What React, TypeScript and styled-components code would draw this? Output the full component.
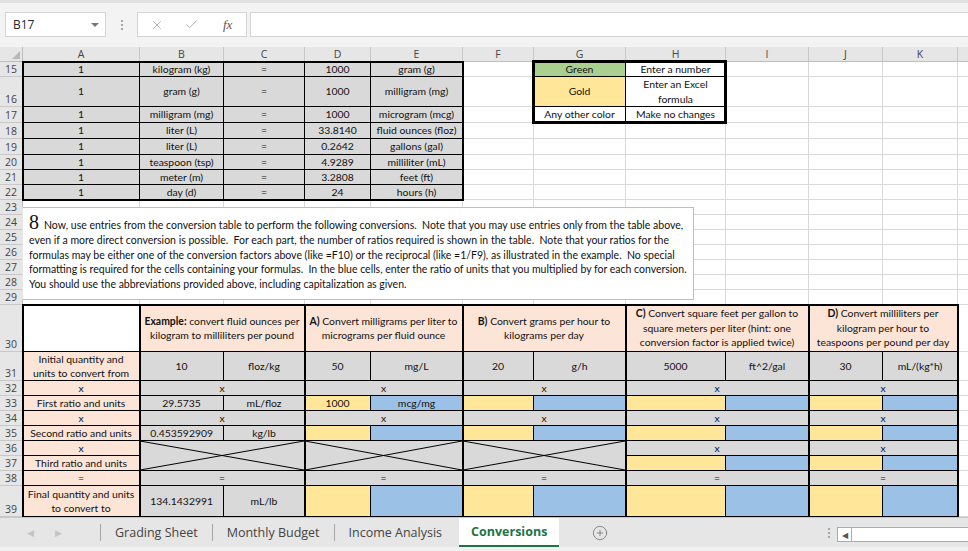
import React from 'react';
import styled, { createGlobalStyle } from 'styled-components';
import { X, Check, CirclePlus } from 'lucide-react';

const GRAY = '#d9d9d9';
const GOLD = '#ffe699';
const BLUE = '#9bc2e6';
const PEACH = '#fce4d6';
const GREEN = '#a9d08e';

const COL_WIDTHS = [117, 84, 81, 66, 92, 71, 92, 100, 83, 74, 75, 60];
// column L is only a sliver at the right edge, its letter is off-screen
const COL_NAMES = ['A', 'B', 'C', 'D', 'E', 'F', 'G', 'H', 'I', 'J', 'K', ''];
const ROW_HEIGHTS: [number, number][] = [
  [15, 15], [16, 30], [17, 16], [18, 16], [19, 16], [20, 15], [21, 15], [22, 15],
  [23, 15], [24, 15], [25, 15], [26, 15], [27, 15], [28, 15], [29, 15],
  [30, 47], [31, 29], [32, 15], [33, 15], [34, 15], [35, 15], [36, 15], [37, 15], [38, 15], [39, 31],
];

const GlobalStyle = createGlobalStyle`
  html, body { margin: 0; padding: 0; background: #fff; }
  body { font-family: Lato, "Liberation Sans", sans-serif; }
  * { box-sizing: border-box; }
`;

const Window = styled.div`
  width: 968px;
  height: 551px;
  overflow: hidden;
  display: flex;
  flex-direction: column;
  background: #f3f3f3;
`;

/* ---------- formula bar ---------- */

const FormulaBar = styled.div`
  height: 47px;
  flex: none;
  display: flex;
  align-items: flex-start;
  padding: 9px 0 0 5px;
  border-top: 3px solid #e1e1e1;
`;

const NameBox = styled.div`
  width: 101px;
  height: 25px;
  background: #fff;
  border: 1px solid #d4d4d4;
  display: flex;
  align-items: center;
  justify-content: space-between;
  padding: 0 6px 0 7px;
  font-family: "Open Sans", sans-serif;
  font-size: 12px;
  color: #262626;
`;

const DropArrow = styled.span`
  width: 0;
  height: 0;
  border-left: 4px solid transparent;
  border-right: 4px solid transparent;
  border-top: 4px solid #777;
`;

const Dots = styled.div`
  width: 31px;
  height: 25px;
  display: flex;
  flex-direction: column;
  align-items: center;
  justify-content: center;
  gap: 2px;
  span {
    width: 2px;
    height: 2px;
    background: #a6a6a6;
  }
`;

const FuncBox = styled.div`
  width: 110px;
  height: 25px;
  background: #fff;
  border: 1px solid #d4d4d4;
  display: flex;
  align-items: center;
  padding-left: 12px;
  gap: 20px;
  color: #a6a6a6;
`;

const Fx = styled.span`
  font-family: "Liberation Serif", serif;
  font-style: italic;
  font-size: 13px;
  color: #555;
  margin-left: 4px;
`;

const FormulaInput = styled.div`
  flex: 1;
  height: 25px;
  margin-left: 3px;
  background: #fff;
  border: 1px solid #d4d4d4;
  border-right: none;
`;

/* ---------- sheet grid ---------- */

const SheetArea = styled.div`
  position: relative;
  flex: none;
  height: 470px;
  overflow: hidden;
  background: #fff;
`;

const Grid = styled.div`
  display: grid;
  grid-template-columns: 23px ${COL_WIDTHS.map((w) => `${w}px`).join(' ')};
  grid-template-rows: 15px ${ROW_HEIGHTS.map(([, h]) => `${h}px`).join(' ')};
`;

const Corner = styled.div`
  grid-column: 1;
  grid-row: 1;
  background: #e6e6e6;
  border-right: 1px solid #bdbdbd;
  border-bottom: 1px solid #bdbdbd;
  position: relative;
  &::after {
    content: '';
    position: absolute;
    right: 2px;
    bottom: 2px;
    border-left: 8px solid transparent;
    border-bottom: 8px solid #b8b8b8;
  }
`;

const ColHead = styled.div<{ $col: number }>`
  grid-column: ${(p) => p.$col + 2};
  grid-row: 1;
  background: #e6e6e6;
  border-right: 1px solid #c8c8c8;
  border-bottom: 1px solid #bdbdbd;
  display: flex;
  align-items: center;
  justify-content: center;
  font-family: "Open Sans", sans-serif;
  font-size: 10.5px;
  color: #444;
  overflow: hidden;
`;

const RowHead = styled.div<{ $row: number }>`
  grid-column: 1;
  grid-row: ${(p) => p.$row - 13};
  background: #e6e6e6;
  border-right: 1px solid #bdbdbd;
  border-bottom: 1px solid #c8c8c8;
  display: flex;
  align-items: flex-end;
  justify-content: center;
  font-family: "Open Sans", sans-serif;
  font-size: 10.5px;
  line-height: 14px;
  color: #444;
`;

const GridCell = styled.div<{ $col: number; $row: number }>`
  grid-column: ${(p) => p.$col + 2};
  grid-row: ${(p) => p.$row - 13};
  border-right: 1px solid #d9d9d9;
  border-bottom: 1px solid #d9d9d9;
`;

type CellProps = {
  $col: number;
  $row: number;
  $cs?: number;
  $rs?: number;
  $fill?: string;
  $align?: 'center' | 'right';
};

const Cell = styled.div<CellProps>`
  grid-column: ${(p) => p.$col + 2} / span ${(p) => p.$cs ?? 1};
  grid-row: ${(p) => p.$row - 13} / span ${(p) => p.$rs ?? 1};
  display: flex;
  align-items: center;
  justify-content: ${(p) => (p.$align === 'right' ? 'flex-end' : 'center')};
  padding: ${(p) => (p.$align === 'right' ? '0 10px 0 0' : '0 1px')};
  text-align: center;
  background: ${(p) => p.$fill ?? '#fff'};
  border-right: 1px solid #000;
  border-bottom: 1px solid #000;
  font-size: 10.4px;
  line-height: 14.5px;
  color: #111;
  white-space: nowrap;
  overflow: hidden;
  min-width: 0;
  b {
    font-weight: 700;
  }
`;

const Cross = styled.svg`
  position: absolute;
  inset: 0;
  width: 100%;
  height: 100%;
`;

const CrossCell = styled(Cell)`
  position: relative;
`;

const Frame = styled.div<{ $col: number; $row: number; $cs: number; $rs: number; $w: number }>`
  grid-column: ${(p) => p.$col + 2} / span ${(p) => p.$cs};
  grid-row: ${(p) => p.$row - 13} / span ${(p) => p.$rs};
  margin: ${(p) => `-${Math.ceil(p.$w / 2)}px -${Math.floor(p.$w / 2)}px -${Math.floor(p.$w / 2)}px -${Math.ceil(p.$w / 2)}px`};
  border: ${(p) => p.$w}px solid #000;
  pointer-events: none;
  z-index: 1;
`;

const TextBox = styled.div`
  position: absolute;
  left: 22px;
  top: 160px;
  width: 672px;
  height: 93px;
  background: #fff;
  border: 1px solid #bfbfbf;
  border-left-color: #e6e6e6;
  padding: 10px 0 0 6px;
  font-size: 10.5px;
  line-height: 14.8px;
  color: #111;
  overflow: hidden;
  z-index: 2;
`;

const TextLine = styled.div`
  white-space: pre;
  height: 14.8px;
`;

const BigDigit = styled.span`
  font-family: "Liberation Serif", serif;
  font-size: 20px;
  line-height: 0;
  margin-right: 5px;
`;

/* ---------- sheet tabs ---------- */

const TabBar = styled.div`
  flex: 1;
  display: flex;
  align-items: stretch;
  background: #e6e6e6;
  border-top: 1px solid #c6c6c6;
  border-bottom: 4px solid #f0f0f0;
  font-family: "Open Sans", sans-serif;
  font-size: 12.5px;
  color: #444;
`;

const Nav = styled.div`
  width: 100px;
  display: flex;
  align-items: center;
  padding-left: 27px;
  gap: 21px;
  color: #c4c4c4;
  font-size: 9px;
`;

const Sep = styled.div`
  width: 1px;
  background: #a6a6a6;
  margin: 6px 0 6px;
`;

const Tab = styled.div<{ $active?: boolean }>`
  display: flex;
  align-items: center;
  padding: 0 ${(p) => (p.$active ? '12px' : '14px')};
  margin-left: ${(p) => (p.$active ? '3px' : '0')};
  background: ${(p) => (p.$active ? '#fff' : 'transparent')};
  color: ${(p) => (p.$active ? '#217346' : '#444')};
  font-weight: ${(p) => (p.$active ? 700 : 400)};
  border-bottom: ${(p) => (p.$active ? '2px solid #217346' : 'none')};
`;

const AddSheet = styled.div`
  display: flex;
  align-items: center;
  margin-left: 33px;
  color: #7a7a7a;
`;

const Spacer = styled.div`
  flex: 1;
`;

const ScrollDots = styled(Dots)`
  width: 17px;
  height: auto;
`;

const HScroll = styled.div`
  width: 131px;
  margin: 9px 0 5px;
  background: #fff;
  border: 1px solid #ababab;
  border-right: none;
  display: flex;
`;

const HScrollBtn = styled.div`
  width: 14px;
  border-right: 1px solid #ababab;
  display: flex;
  align-items: center;
  justify-content: center;
  color: #555;
  font-size: 8px;
`;

/* ---------- data ---------- */

const CONVERSIONS = [
  ['kilogram (kg)', '1000', 'gram (g)'],
  ['gram (g)', '1000', 'milligram (mg)'],
  ['milligram (mg)', '1000', 'microgram (mcg)'],
  ['liter (L)', '33.8140', 'fluid ounces (floz)'],
  ['liter (L)', '0.2642', 'gallons (gal)'],
  ['teaspoon (tsp)', '4.9289', 'milliliter (mL)'],
  ['meter (m)', '3.2808', 'feet (ft)'],
  ['day (d)', '24', 'hours (h)'],
];

const SECTIONS: { col: number; head: React.ReactNode; init: [string, string] }[] = [
  {
    col: 1,
    head: (
      <>
        <b>Example:</b>&nbsp;convert fluid ounces per
        <br />
        kilogram to milliliters per pound
      </>
    ),
    init: ['10', 'floz/kg'],
  },
  {
    col: 3,
    head: (
      <>
        <b>A)</b>&nbsp;Convert milligrams per liter to
        <br />
        micrograms per fluid ounce
      </>
    ),
    init: ['50', 'mg/L'],
  },
  {
    col: 5,
    head: (
      <>
        <b>B)</b>&nbsp;Convert grams per hour to
        <br />
        kilograms per day
      </>
    ),
    init: ['20', 'g/h'],
  },
  {
    col: 7,
    head: (
      <>
        <b>C)</b>&nbsp;Convert square feet per gallon to
        <br />
        square meters per liter (hint: one
        <br />
        conversion factor is applied twice)
      </>
    ),
    init: ['5000', 'ft^2/gal'],
  },
  {
    col: 9,
    head: (
      <>
        <b>D)</b>&nbsp;Convert milliliters per
        <br />
        kilogram per hour to
        <br />
        teaspoons per pound per day
      </>
    ),
    init: ['30', 'mL/(kg*h)'],
  },
];

const ROW_LABELS: [number, React.ReactNode][] = [
  [31, <>Initial quantity and<br />units to convert from</>],
  [32, 'x'],
  [33, 'First ratio and units'],
  [34, 'x'],
  [35, 'Second ratio and units'],
  [36, 'x'],
  [37, 'Third ratio and units'],
  [38, '='],
  [39, <>Final quantity and units<br />to convert to</>],
];

const INSTRUCTIONS = [
  'Now, use entries from the conversion table to perform the following conversions.  Note that you may use entries only from the table above,',
  'even if a more direct conversion is possible.  For each part, the number of ratios required is shown in the table.  Note that your ratios for the',
  'formulas may be either one of the conversion factors above (like =F10) or the reciprocal (like =1/F9), as illustrated in the example.  No special',
  'formatting is required for the cells containing your formulas.  In the blue cells, enter the ratio of units that you multiplied by for each conversion.',
  'You should use the abbreviations provided above, including capitalization as given.',
];

const EXAMPLE_VALUES: Record<number, [string, string]> = {
  33: ['29.5735', 'mL/floz'],
  35: ['0.453592909', 'kg/lb'],
  39: ['134.1432991', 'mL/lb'],
};

function InputPair({ col, row, value, unit }: { col: number; row: number; value?: string; unit?: string }) {
  return (
    <>
      <Cell $col={col} $row={row} $fill={GOLD}>{value}</Cell>
      <Cell $col={col + 1} $row={row} $fill={BLUE}>{unit}</Cell>
    </>
  );
}

function Section({ col, head, init }: { col: number; head: React.ReactNode; init: [string, string] }) {
  const isExample = col === 1;
  const hasThird = col >= 7;
  return (
    <>
      <Cell $col={col} $row={30} $cs={2} $fill={PEACH}>
        <div>{head}</div>
      </Cell>
      <Cell $col={col} $row={31} $fill={GRAY}>{init[0]}</Cell>
      <Cell $col={col + 1} $row={31} $fill={GRAY}>{init[1]}</Cell>
      {[32, 34, 38].map((r) => (
        <Cell key={r} $col={col} $row={r} $cs={2} $fill={GRAY}>
          {r === 38 ? '=' : 'x'}
        </Cell>
      ))}
      {[33, 35, 39].map((r) =>
        isExample ? (
          <React.Fragment key={r}>
            <Cell $col={col} $row={r} $fill={GRAY} $align={r === 33 ? 'center' : 'right'}>
              {EXAMPLE_VALUES[r][0]}
            </Cell>
            <Cell $col={col + 1} $row={r} $fill={GRAY}>
              {EXAMPLE_VALUES[r][1]}
            </Cell>
          </React.Fragment>
        ) : (
          <InputPair
            key={r}
            col={col}
            row={r}
            value={r === 33 && col === 3 ? '1000' : undefined}
            unit={r === 33 && col === 3 ? 'mcg/mg' : undefined}
          />
        )
      )}
      {hasThird ? (
        <>
          <Cell $col={col} $row={36} $cs={2} $fill={GRAY}>x</Cell>
          <InputPair col={col} row={37} />
        </>
      ) : (
        <CrossCell $col={col} $row={36} $cs={2} $rs={2} $fill={GRAY}>
          <Cross viewBox="0 0 100 100" preserveAspectRatio="none">
            <line x1="0" y1="0" x2="100" y2="100" stroke="#000" strokeWidth="1" vectorEffect="non-scaling-stroke" />
            <line x1="0" y1="100" x2="100" y2="0" stroke="#000" strokeWidth="1" vectorEffect="non-scaling-stroke" />
          </Cross>
        </CrossCell>
      )}
      <Frame $col={col} $row={30} $cs={2} $rs={10} $w={2} />
    </>
  );
}

export default function App() {
  const rows = ROW_HEIGHTS.map(([r]) => r);
  return (
    <Window>
      <GlobalStyle />
      <FormulaBar>
        <NameBox>
          B17
          <DropArrow />
        </NameBox>
        <Dots>
          <span />
          <span />
          <span />
        </Dots>
        <FuncBox>
          <X size={14} strokeWidth={1.4} />
          <Check size={15} strokeWidth={1.4} />
          <Fx>fx</Fx>
        </FuncBox>
        <FormulaInput />
      </FormulaBar>

      <SheetArea>
        <Grid>
          <Corner />
          {COL_NAMES.map((n, i) => (
            <ColHead key={i} $col={i}>{n}</ColHead>
          ))}
          {rows.map((r) => (
            <RowHead key={r} $row={r}>{r}</RowHead>
          ))}
          {rows.map((r) =>
            COL_NAMES.map((_, i) => <GridCell key={`${i}-${r}`} $col={i} $row={r} />)
          )}

          {CONVERSIONS.map(([from, factor, to], i) => (
            <React.Fragment key={i}>
              <Cell $col={0} $row={15 + i} $fill={GRAY}>1</Cell>
              <Cell $col={1} $row={15 + i} $fill={GRAY}>{from}</Cell>
              <Cell $col={2} $row={15 + i} $fill={GRAY}>=</Cell>
              <Cell $col={3} $row={15 + i} $fill={GRAY}>{factor}</Cell>
              <Cell $col={4} $row={15 + i} $fill={GRAY}>{to}</Cell>
            </React.Fragment>
          ))}
          <Frame $col={0} $row={15} $cs={5} $rs={8} $w={2} />

          <Cell $col={6} $row={15} $fill={GREEN}>Green</Cell>
          <Cell $col={7} $row={15}>Enter a number</Cell>
          <Cell $col={6} $row={16} $fill={GOLD}>Gold</Cell>
          <Cell $col={7} $row={16}>
            <div>Enter an Excel<br />formula</div>
          </Cell>
          <Cell $col={6} $row={17}>Any other color</Cell>
          <Cell $col={7} $row={17}>Make no changes</Cell>
          <Frame $col={6} $row={15} $cs={2} $rs={3} $w={3} />

          <Cell $col={0} $row={30} />
          {ROW_LABELS.map(([r, label]) => (
            <Cell key={r} $col={0} $row={r} $fill={PEACH}>
              <div>{label}</div>
            </Cell>
          ))}
          <Frame $col={0} $row={30} $cs={1} $rs={10} $w={2} />
          {SECTIONS.map((s) => (
            <Section key={s.col} {...s} />
          ))}
        </Grid>

        <TextBox>
          {INSTRUCTIONS.map((line, i) => (
            <TextLine key={i}>
              {i === 0 && <BigDigit>8</BigDigit>}
              {line}
            </TextLine>
          ))}
        </TextBox>
      </SheetArea>

      <TabBar>
        <Nav>
          <span>◀</span>
          <span>▶</span>
        </Nav>
        <Sep />
        <Tab>Grading Sheet</Tab>
        <Sep />
        <Tab>Monthly Budget</Tab>
        <Sep />
        <Tab>Income Analysis</Tab>
        <Tab $active>Conversions</Tab>
        <AddSheet>
          <CirclePlus size={16} strokeWidth={1.3} />
        </AddSheet>
        <Spacer />
        <ScrollDots>
          <span />
          <span />
          <span />
        </ScrollDots>
        <HScroll>
          <HScrollBtn>◀</HScrollBtn>
        </HScroll>
      </TabBar>
    </Window>
  );
}
